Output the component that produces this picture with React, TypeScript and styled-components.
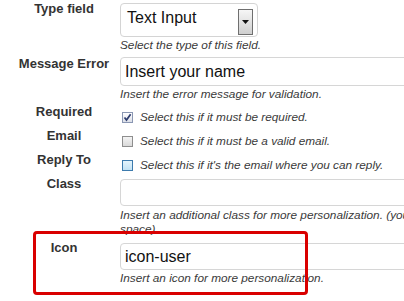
import { createGlobalStyle, styled } from 'styled-components';

const GlobalStyle = createGlobalStyle`
  html, body {
    margin: 0;
    padding: 0;
    background: #ffffff;
  }
  body {
    font-family: 'Liberation Sans', Arial, sans-serif;
    color: #333333;
  }
`;

const Page = styled.div`
  position: relative;
  width: 404px;
  height: 301px;
  overflow: hidden;
  padding-top: 1px;
  box-sizing: border-box;
`;

const Row = styled.div<{ $gap?: number }>`
  display: grid;
  grid-template-columns: 120px 520px;
  align-items: start;
  margin-top: ${(p) => p.$gap ?? 0}px;
`;

const Label = styled.div`
  padding-left: 8px;
  text-align: center;
  font-size: 13px;
  line-height: 16px;
  font-weight: 700;
  color: #333333;
`;

const Field = styled.div<{ $offset?: number }>`
  padding-top: ${(p) => p.$offset ?? 0}px;
`;

const SelectBox = styled.div`
  position: relative;
  width: 138px;
  height: 34px;
  box-sizing: border-box;
  border: 1px solid #d4d4d4;
  border-radius: 4px;
  display: flex;
  align-items: center;
  justify-content: space-between;
  padding: 0 4px 0 6px;
  font-size: 16px;
  color: #111111;
  line-height: 18px;
`;

const SelectText = styled.span`
  margin-top: -5px;
`;

const DropButton = styled.span`
  width: 15px;
  height: 26px;
  box-sizing: border-box;
  border: 1px solid #6f6f6f;
  background: linear-gradient(#f6f6f6, #cfcfcf);
  display: flex;
  align-items: center;
  justify-content: center;
  margin-top: 3px;
`;

const TextBox = styled.input<{ $h: number }>`
  display: block;
  width: 400px;
  height: ${(p) => p.$h}px;
  box-sizing: border-box;
  border: 1px solid #d6d6d6;
  border-radius: 4px;
  padding: 0 4px;
  margin: 0;
  font-family: 'Liberation Sans', Arial, sans-serif;
  font-size: 16px;
  color: #111111;
  background: #ffffff;
  outline: none;
`;

const Help = styled.div<{ $gap?: number }>`
  margin-top: ${(p) => p.$gap ?? 1}px;
  font-size: 11.8px;
  line-height: 14px;
  font-style: italic;
  color: #3a3a3a;
  white-space: nowrap;
`;

const CheckLine = styled.div`
  display: flex;
  align-items: center;
  gap: 7px;
  margin-top: 6px;
  margin-left: 2px;
  font-size: 11.8px;
  line-height: 14px;
  font-style: italic;
  color: #3a3a3a;
  white-space: nowrap;
`;

const palette = {
  checked: { border: '#8a97b3', bg: 'linear-gradient(#ffffff, #dcdfe8)' },
  plain: { border: '#8e8e8e', bg: 'linear-gradient(#f4f4f4, #d9d9d9)' },
  hover: { border: '#3d7bad', bg: 'linear-gradient(#e4f4fc, #c2e2f4)' },
};

const Box = styled.span<{ $kind: keyof typeof palette }>`
  width: 11px;
  height: 11px;
  box-sizing: border-box;
  border: 1px solid ${(p) => palette[p.$kind].border};
  background: ${(p) => palette[p.$kind].bg};
  display: flex;
  align-items: center;
  justify-content: center;
  flex-shrink: 0;
`;

const Highlight = styled.div`
  position: absolute;
  left: 33px;
  top: 231px;
  width: 275px;
  height: 64px;
  box-sizing: border-box;
  border: 3px solid #d90000;
  border-radius: 4px;
  pointer-events: none;
`;

const App = () => {
  return (
    <>
      <GlobalStyle />
      <Page>
        <Row>
          <Label>Type field</Label>
          <Field $offset={2}>
            <SelectBox>
              <SelectText>Text Input</SelectText>
              <DropButton>
                <svg width="7" height="4" viewBox="0 0 7 4">
                  <path d="M0 0h7L3.5 4z" fill="#111" />
                </svg>
              </DropButton>
            </SelectBox>
            <Help>Select the type of this field.</Help>
          </Field>
        </Row>

        <Row $gap={4}>
          <Label>Message Error</Label>
          <Field $offset={1}>
            <TextBox $h={29} readOnly defaultValue="Insert your name" />
            <Help>Insert the error message for validation.</Help>
          </Field>
        </Row>

        <Row $gap={3}>
          <Label>Required</Label>
          <CheckLine>
            <Box $kind="checked">
              <svg width="9" height="9" viewBox="0 0 9 9">
                <path d="M1.5 4.5l2 2.6L7.6 1.2" stroke="#2d3c6e" strokeWidth="1.7" fill="none" />
              </svg>
            </Box>
            Select this if it must be required.
          </CheckLine>
        </Row>

        <Row $gap={4}>
          <Label>Email</Label>
          <CheckLine>
            <Box $kind="plain" />
            Select this if it must be a valid email.
          </CheckLine>
        </Row>

        <Row $gap={4}>
          <Label>Reply To</Label>
          <CheckLine>
            <Box $kind="hover" />
            Select this if it's the email where you can reply.
          </CheckLine>
        </Row>

        <Row $gap={4}>
          <Label>Class</Label>
          <Field $offset={3}>
            <TextBox $h={27} readOnly defaultValue="" />
            <Help $gap={2}>
              Insert an additional class for more personalization. (you can add more classes separated by a
              <br />
              space)
            </Help>
          </Field>
        </Row>

        <Row $gap={4}>
          <Label>Icon</Label>
          <Field $offset={3}>
            <TextBox $h={27} readOnly defaultValue="icon-user" />
            <Help>Insert an icon for more personalization.</Help>
          </Field>
        </Row>

        <Highlight />
      </Page>
    </>
  );
};

export default App;
